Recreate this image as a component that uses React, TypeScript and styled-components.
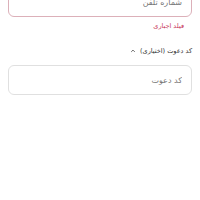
import styled, { createGlobalStyle } from "styled-components";

const GlobalStyle = createGlobalStyle`
  body {
    margin: 0;
    background: #ffffff;
    font-family: "DejaVu Sans", "Noto Sans", sans-serif;
  }
`;

const Form = styled.div`
  direction: rtl;
  padding: 0 8px;
  margin-top: -13px;
  display: flex;
  flex-direction: column;
`;

const Input = styled.input<{ $error?: boolean }>`
  box-sizing: border-box;
  width: 100%;
  height: 30px;
  border: 1px solid ${(p) => (p.$error ? "#dcb0b9" : "#e0e0e0")};
  border-radius: 6px;
  padding: 0 9px;
  font-family: inherit;
  font-size: 8px;
  direction: rtl;
  outline: none;
  background: #fff;

  ::placeholder {
    color: #c2c2c2;
  }
`;

const ErrorText = styled.div`
  margin-top: 4px;
  padding-right: 8px;
  font-size: 6.5px;
  line-height: 10px;
  color: #c7385a;
`;

const Label = styled.div`
  margin-top: 15px;
  margin-bottom: 9px;
  display: flex;
  align-items: center;
  gap: 4px;
  font-size: 6.5px;
  line-height: 10px;
  color: #333333;
`;

const Chevron = styled.svg`
  width: 6px;
  height: 6px;
`;

export default function App() {
  return (
    <>
      <GlobalStyle />
      <Form>
        <Input $error placeholder="شماره تلفن" />
        <ErrorText>فیلد اجباری</ErrorText>
        <Label>
          <span>کد دعوت (اختیاری)</span>
          <Chevron viewBox="0 0 10 10">
            <path d="M2 6.5 L5 3.5 L8 6.5" fill="none" stroke="#333" strokeWidth="1.2" />
          </Chevron>
        </Label>
        <Input placeholder="کد دعوت" />
      </Form>
    </>
  );
}
